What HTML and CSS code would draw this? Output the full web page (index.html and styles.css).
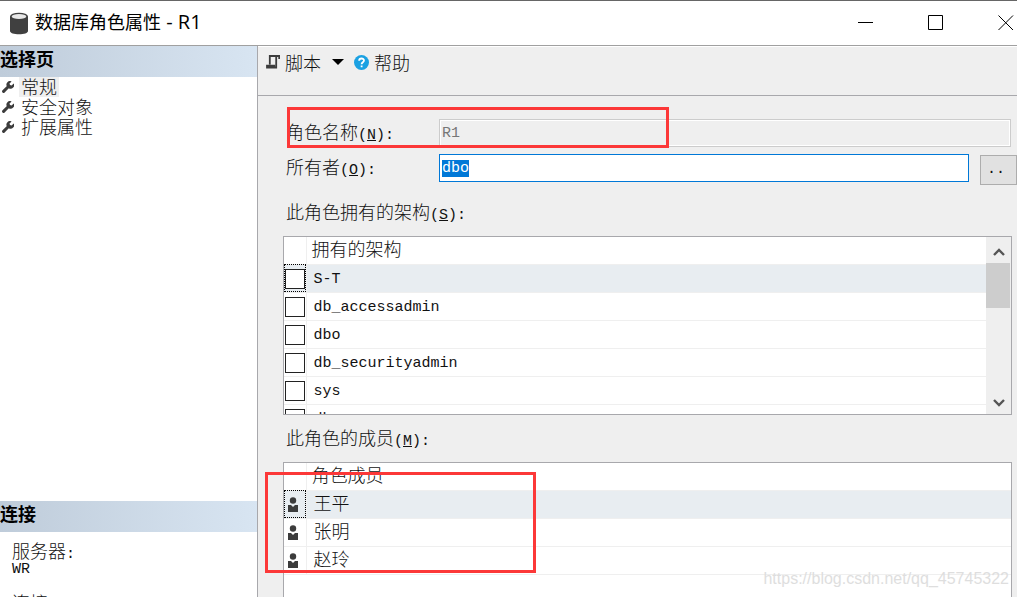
FILE: index.html
```html
<!DOCTYPE html>
<html lang="zh-CN">
<head>
<meta charset="utf-8">
<title>数据库角色属性 - R1</title>
<link rel="stylesheet" href="styles.css">
</head>
<body>
<svg class="defs" aria-hidden="true">
  <symbol id="wrench" viewBox="0 0 12 12"><path d="M1.6 10.4 6.2 5.8" stroke="#3c3c3c" stroke-width="3" stroke-linecap="round"/><path d="M9.6.4A3.6 3.6 0 0 0 4.6 4.8L7 7.4A3.6 3.6 0 0 0 11.7 2.4L9.6 4.5 8 4.1 7.5 2.5Z" fill="#3c3c3c"/></symbol>
  <symbol id="user" viewBox="0 0 10 15"><circle cx="5" cy="3.5" r="3.2" fill="#3c3c3c"/><path d="M0 8H3L5 10 7 8H10V15H0Z" fill="#3c3c3c"/></symbol>
</svg>
<div class="window">
  <header class="titlebar">
    <svg class="app-icon" viewBox="0 0 20 23"><path d="M1 4.5V19C1 21 5 22.3 10 22.3S19 21 19 19V4.5Z" fill="#404040"/><ellipse cx="10" cy="4.5" rx="9" ry="3.8" fill="#404040"/><ellipse cx="10" cy="4.5" rx="7.3" ry="2.5" fill="#e8e8e8"/></svg>
    <h1 class="title">数据库角色属性<span class="title-name"> - R1</span></h1>
    <div class="controls">
      <button class="control" aria-label="最小化"><svg viewBox="0 0 16 16"><path d="M0 7.5H15"/></svg></button>
      <button class="control" aria-label="最大化"><svg viewBox="0 0 16 16"><path d="M.5.5H14.5V14.5H.5Z"/></svg></button>
      <button class="control" aria-label="关闭"><svg viewBox="0 0 16 16"><path d="M.5.5 15 15M15 .5.5 15"/></svg></button>
    </div>
  </header>
  <div class="body">
    <aside class="sidebar">
      <nav class="pages">
        <h2 class="section-title">选择页</h2>
        <ul class="page-list">
          <li><button class="page"><svg class="wrench"><use href="#wrench"/></svg><span class="page-name current">常规</span></button></li>
          <li><button class="page"><svg class="wrench"><use href="#wrench"/></svg><span class="page-name">安全对象</span></button></li>
          <li><button class="page"><svg class="wrench"><use href="#wrench"/></svg><span class="page-name">扩展属性</span></button></li>
        </ul>
      </nav>
      <section class="connection">
        <h2 class="section-title">连接</h2>
        <dl class="details">
          <dt>服务器<span class="latin">:</span></dt>
          <dd class="latin">WR</dd>
          <dt>连接<span class="latin">:</span></dt>
        </dl>
      </section>
    </aside>
    <main class="main">
      <div class="toolbar">
        <button class="tool">
          <svg class="script-icon" viewBox="0 0 14 14"><path d="M3.8 9.5V1H13.2V4M10.2 1V12.5H1V10.6H8.2V12" fill="none" stroke="#3c3c3c" stroke-width="1.8"/></svg>
          脚本
          <svg class="arrow" viewBox="0 0 12 6"><path d="M0 0H12L6 6Z"/></svg>
        </button>
        <button class="tool">
          <svg class="help-icon" viewBox="0 0 14 14"><circle cx="7" cy="7" r="7" fill="#1ba1e2"/><path d="M4.8 5.4C4.8 2.5 9.3 2.6 9.3 5.2 9.3 6.8 7.1 6.8 7.1 8.6M7.1 9.7V11.5" fill="none" stroke="#fff" stroke-width="1.7"/></svg>
          帮助
        </button>
      </div>
      <form class="form">
        <div class="fields">
          <div class="field">
            <label for="role">角色名称<span class="latin">(<u>N</u>):</span></label>
            <input class="text latin" id="role" value="R1" disabled>
          </div>
          <div class="field">
            <label for="owner">所有者<span class="latin">(<u>O</u>):</span></label>
            <input class="text latin" id="owner" value="dbo">
            <button class="browse latin" type="button" aria-label="浏览">..</button>
          </div>
          <div class="mark mark-role"></div>
        </div>
        <div class="caption" id="schemas-label">此角色拥有的架构<span class="latin">(<u>S</u>):</span></div>
        <div class="list schemas">
          <table class="grid" aria-labelledby="schemas-label">
            <thead><tr><th class="mini"></th><th>拥有的架构</th></tr></thead>
            <tbody class="latin">
              <tr class="selected"><td class="mini"><input type="checkbox" id="s1"></td><td><label for="s1">S-T</label></td></tr>
              <tr><td class="mini"><input type="checkbox" id="s2"></td><td><label for="s2">db_accessadmin</label></td></tr>
              <tr><td class="mini"><input type="checkbox" id="s3"></td><td><label for="s3">dbo</label></td></tr>
              <tr><td class="mini"><input type="checkbox" id="s4"></td><td><label for="s4">db_securityadmin</label></td></tr>
              <tr><td class="mini"><input type="checkbox" id="s5"></td><td><label for="s5">sys</label></td></tr>
              <tr><td class="mini"><input type="checkbox" id="s6"></td><td><label for="s6">dbo</label></td></tr>
            </tbody>
          </table>
          <div class="scrollbar">
            <button class="scroll" type="button" aria-label="向上"><svg viewBox="0 0 12 8"><path d="M1 7 6 2 11 7"/></svg></button>
            <div class="thumb"></div>
            <button class="scroll last" type="button" aria-label="向下"><svg viewBox="0 0 12 8"><path d="M1 1 6 6 11 1"/></svg></button>
          </div>
        </div>
        <div class="caption" id="members-label">此角色的成员<span class="latin">(<u>M</u>):</span></div>
        <div class="members-area">
          <div class="list members">
            <table class="grid" aria-labelledby="members-label">
              <thead><tr><th class="mini"></th><th>角色成员</th></tr></thead>
              <tbody>
                <tr class="selected"><td class="mini"><svg class="user"><use href="#user"/></svg></td><td>王平</td></tr>
                <tr><td class="mini"><svg class="user"><use href="#user"/></svg></td><td>张明</td></tr>
                <tr><td class="mini"><svg class="user"><use href="#user"/></svg></td><td>赵玲</td></tr>
              </tbody>
            </table>
          </div>
          <div class="mark mark-members"></div>
        </div>
      </form>
    </main>
  </div>
  <div class="watermark">https://blog.csdn.net/qq_45745322</div>
</div>
<script src="main.js"></script>
</body>
</html>
```

FILE: styles.css
```css
* { box-sizing: border-box; }

body {
  margin: 0;
  font: 300 18px/20px "Noto Sans CJK SC", sans-serif;
  color: #111;
}

button, input { font: inherit; color: inherit; }
button { padding: 0; border: 0; background: none; }
svg { display: block; flex: none; }
h1, h2, ul, dl, dd { margin: 0; padding: 0; }
.defs { position: absolute; width: 0; height: 0; }
.latin { font-family: "Liberation Mono", monospace; font-size: 15px; }
span.latin { line-height: 0; }

.window {
  position: relative;
  display: flex;
  flex-direction: column;
  height: 100vh;
  overflow: hidden;
  border-top: 1px solid #666;
  background: #fff;
}

.titlebar {
  display: flex;
  align-items: center;
  flex: none;
  height: 45px;
  padding-left: 9px;
  border-bottom: 1px solid #a0a0a0;
}
.app-icon { width: 20px; height: 23px; margin-right: 6px; }
.title { flex: 1; padding-bottom: 2px; font: 400 18px/24px "Open Sans", "Noto Sans CJK SC", sans-serif; color: #000; }
.title-name { font-size: 20px; line-height: 0; }
.controls { display: flex; gap: 54px; margin-right: 3px; }
.control { width: 16px; height: 16px; }
.control svg { width: 16px; height: 16px; fill: none; stroke: #000; }

.body { display: flex; flex: 1; min-height: 0; }

.sidebar {
  display: flex;
  flex-direction: column;
  flex: 0 0 258px;
  border-right: 1px solid #a8a8ac;
}
.pages { flex: 1; }
.section-title {
  height: 31px;
  font-size: 18px;
  font-weight: 700;
  line-height: 25px;
  color: #000;
  background: linear-gradient(90deg, #bfccda, #d8e5f2);
}
.page-list { list-style: none; }
.page { display: flex; align-items: center; height: 20px; padding-left: 2px; }
.wrench { width: 12px; height: 12px; margin-right: 5px; }
.page-name { padding: 0 2px; line-height: 18px; height: 20px; }
.current { background: #efefef; }
.connection { flex: 0 0 96px; overflow: hidden; }
.details { padding: 8px 12px; }
.details dd { margin-bottom: 12px; line-height: 20px; }

.main { display: flex; flex-direction: column; flex: 1; min-width: 0; background: #efefef; }
.toolbar {
  display: flex;
  align-items: flex-start;
  gap: 10px;
  flex: none;
  height: 50px;
  padding: 5px 8px;
  border-top: 1px solid #fff;
  border-bottom: 1px solid #a8a8ac;
}
.tool { display: flex; align-items: center; gap: 5px; line-height: 20px; }
.script-icon { width: 14px; height: 14px; }
.arrow { width: 12px; height: 6px; margin-left: 6px; }
.help-icon { width: 15px; height: 15px; }

.form { display: flex; flex-direction: column; flex: 1; min-height: 0; padding: 23px 0 0 25px; }
.fields { position: relative; display: grid; gap: 7px; }
.field { display: flex; align-items: center; height: 28px; padding-left: 3px; }
.field label { flex: 0 0 153px; padding-bottom: 4px; }
.text {
  flex: 1;
  min-width: 0;
  height: 28px;
  margin-right: 6px;
  padding: 0 2px;
  border: 1px solid #0078d7;
  background: #fff;
  outline: 0;
}
.text:disabled { border-color: #ccc; background: #efefef; color: #777; box-shadow: inset 0 0 0 1px #fff; }
.text::selection { background: #0078d7; color: #fff; }
.browse {
  width: 37px;
  height: 30px;
  margin: 4px 0 0 5px;
  padding-left: 6px;
  border: 1px solid #adadad;
  background: #e1e1e1;
  text-align: left;
}
.caption { padding: 19px 3px 15px; }

.list { display: flex; margin-right: 5px; border: 1px solid #a8a8ac; background: #fff; overflow: hidden; }
.schemas { flex: 0 0 179px; }
.schemas + .caption { padding: 12px 3px 15px; }
.members-area { position: relative; display: flex; flex: 1; min-height: 0; }
.members { flex: 1; border-bottom: 0; }

.grid { flex: 1; border-collapse: collapse; table-layout: fixed; align-self: flex-start; }
.grid th, .grid td { height: 28px; padding: 0 7px 4px; border-bottom: 1px solid #efefef; font-weight: 300; line-height: 20px; text-align: left; vertical-align: middle; }
.grid th { height: 27px; padding: 0 5px 4px; }
.grid .latin td { padding: 4px 7px 0; }
.grid .latin label { display: block; }
.grid .mini, .grid .latin .mini { width: 22px; padding: 0; border-right: 1px solid #efefef; }
.grid .selected { background: #e8edf1; }
.grid .selected .mini { outline: 1px dotted #000; outline-offset: -1px; }
.grid input { display: block; appearance: none; width: 20px; height: 20px; margin: 2px 0 0 1px; border: 1px solid #222; background: #fff; }
.user { width: 10px; height: 15px; margin: 1px 0 0 4px; }

.scrollbar { display: flex; flex-direction: column; flex: 0 0 25px; background: #efefef; }
.scroll { display: grid; place-items: center; height: 26px; padding-top: 3px; }
.scroll svg { width: 12px; height: 8px; fill: none; stroke: #555; stroke-width: 2.4; }
.last { margin-top: auto; }
.thumb { height: 45px; margin-right: 1px; background: #cdcdcd; }

.mark { position: absolute; border: 3px solid #fc3838; pointer-events: none; }
.mark-role { left: 4px; top: -12px; width: 382px; height: 41px; }
.mark-members { left: -18px; top: 10px; width: 271px; height: 101px; }

.watermark {
  position: absolute;
  right: 8px;
  bottom: 8px;
  font: 400 16px/20px "Liberation Sans", sans-serif;
  color: #dedede;
}
```

FILE: main.js
```js
const owner = document.getElementById("owner");
owner.focus();
owner.select();
```
